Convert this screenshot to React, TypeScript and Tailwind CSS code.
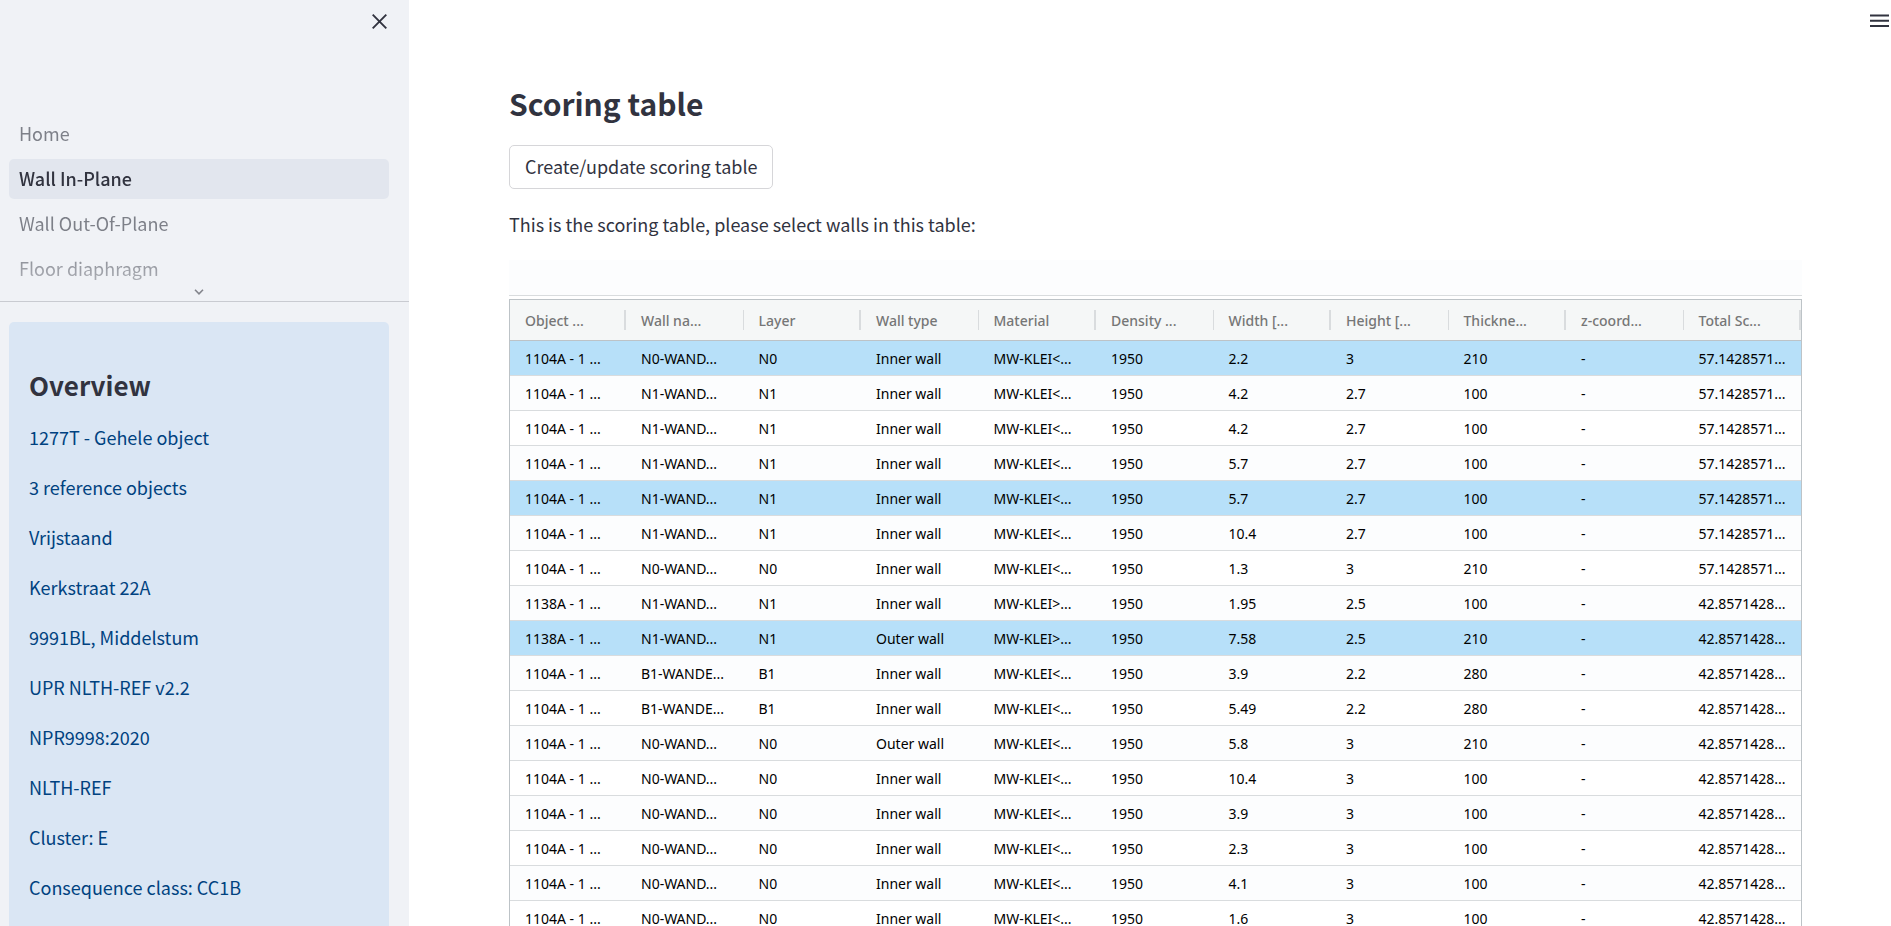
import React from "react";

interface WallRow {
  object: string;
  wall: string;
  layer: string;
  type: string;
  material: string;
  density: string;
  width: string;
  height: string;
  thickness: string;
  z: string;
  score: string;
  selected?: boolean;
}

const pages = ["Home", "Wall In-Plane", "Wall Out-Of-Plane", "Floor diaphragm"];

const overview = [
  "1277T - Gehele object",
  "3 reference objects",
  "Vrijstaand",
  "Kerkstraat 22A",
  "9991BL, Middelstum",
  "UPR NLTH-REF v2.2",
  "NPR9998:2020",
  "NLTH-REF",
  "Cluster: E",
  "Consequence class: CC1B",
];

const columns = [
  "Object ...",
  "Wall na...",
  "Layer",
  "Wall type",
  "Material",
  "Density ...",
  "Width [...",
  "Height [...",
  "Thickne...",
  "z-coord...",
  "Total Sc...",
];

function makeRow(
  object: string,
  wall: string,
  layer: string,
  type: string,
  material: string,
  width: string,
  height: string,
  thickness: string,
  score: string,
  selected = false
): WallRow {
  return { object, wall, layer, type, material, density: "1950", width, height, thickness, z: "-", score, selected };
}

const rows: WallRow[] = [
  makeRow("1104A - 1 ...", "N0-WAND...", "N0", "Inner wall", "MW-KLEI<...", "2.2", "3", "210", "57.1428571...", true),
  makeRow("1104A - 1 ...", "N1-WAND...", "N1", "Inner wall", "MW-KLEI<...", "4.2", "2.7", "100", "57.1428571..."),
  makeRow("1104A - 1 ...", "N1-WAND...", "N1", "Inner wall", "MW-KLEI<...", "4.2", "2.7", "100", "57.1428571..."),
  makeRow("1104A - 1 ...", "N1-WAND...", "N1", "Inner wall", "MW-KLEI<...", "5.7", "2.7", "100", "57.1428571..."),
  makeRow("1104A - 1 ...", "N1-WAND...", "N1", "Inner wall", "MW-KLEI<...", "5.7", "2.7", "100", "57.1428571...", true),
  makeRow("1104A - 1 ...", "N1-WAND...", "N1", "Inner wall", "MW-KLEI<...", "10.4", "2.7", "100", "57.1428571..."),
  makeRow("1104A - 1 ...", "N0-WAND...", "N0", "Inner wall", "MW-KLEI<...", "1.3", "3", "210", "57.1428571..."),
  makeRow("1138A - 1 ...", "N1-WAND...", "N1", "Inner wall", "MW-KLEI>...", "1.95", "2.5", "100", "42.8571428..."),
  makeRow("1138A - 1 ...", "N1-WAND...", "N1", "Outer wall", "MW-KLEI>...", "7.58", "2.5", "210", "42.8571428...", true),
  makeRow("1104A - 1 ...", "B1-WANDE...", "B1", "Inner wall", "MW-KLEI<...", "3.9", "2.2", "280", "42.8571428..."),
  makeRow("1104A - 1 ...", "B1-WANDE...", "B1", "Inner wall", "MW-KLEI<...", "5.49", "2.2", "280", "42.8571428..."),
  makeRow("1104A - 1 ...", "N0-WAND...", "N0", "Outer wall", "MW-KLEI<...", "5.8", "3", "210", "42.8571428..."),
  makeRow("1104A - 1 ...", "N0-WAND...", "N0", "Inner wall", "MW-KLEI<...", "10.4", "3", "100", "42.8571428..."),
  makeRow("1104A - 1 ...", "N0-WAND...", "N0", "Inner wall", "MW-KLEI<...", "3.9", "3", "100", "42.8571428..."),
  makeRow("1104A - 1 ...", "N0-WAND...", "N0", "Inner wall", "MW-KLEI<...", "2.3", "3", "100", "42.8571428..."),
  makeRow("1104A - 1 ...", "N0-WAND...", "N0", "Inner wall", "MW-KLEI<...", "4.1", "3", "100", "42.8571428..."),
  makeRow("1104A - 1 ...", "N0-WAND...", "N0", "Inner wall", "MW-KLEI<...", "1.6", "3", "100", "42.8571428..."),
];

function rowColor(row: WallRow, index: number) {
  if (row.selected) return "bg-[#b7e0f9]";
  return index % 2 === 1 ? "bg-[#fcfdfe]" : "bg-white";
}

function Sidebar() {
  return (
    <aside className="w-[409px] shrink-0 bg-[#f0f2f6] overflow-hidden">
      <div className="h-[114px] flex justify-end items-start pt-[11px] pr-5">
        <button type="button" aria-label="Close sidebar" className="w-5 h-5 text-[#31333f]">
          <svg viewBox="0 0 20 20" className="w-5 h-5" fill="none" stroke="currentColor" strokeWidth="1.9">
            <path d="M3.7 3.7l13.6 13.6M17.3 3.7L3.7 17.3" />
          </svg>
        </button>
      </div>

      <nav className="border-b border-[#c9cbd1] pl-[9px] pr-5">
        <ul className="flex flex-col gap-[5px] [mask-image:linear-gradient(#000_75%,transparent_125%)]">
          {pages.map((page) => (
            <li key={page}>
              <a
                href="#"
                className={
                  page === "Wall In-Plane"
                    ? "block h-10 px-2.5 rounded-[5px] bg-[#e2e6ee] text-lg leading-[38px] font-medium text-[#31333f]"
                    : "block h-10 px-2.5 rounded-[5px] text-lg leading-[38px] text-[#31333f]/60"
                }
              >
                {page}
              </a>
            </li>
          ))}
        </ul>
        <div className="h-[12px] flex justify-center">
          <svg viewBox="0 0 10 6" className="w-[10px] h-[6px]" fill="none" stroke="#83858c" strokeWidth="1.6">
            <path d="M1 0.8l4 4 4-4" />
          </svg>
        </div>
      </nav>

      <section className="mt-5 ml-[9px] mr-5 px-5 pt-[43px] pb-10 rounded-[5px] bg-[#dae6f4]">
        <h2 className="text-[26px] leading-10 font-bold text-[#31333f]">Overview</h2>
        <div className="mt-4 flex flex-col gap-[18px] text-lg leading-8 text-[#004280]">
          {overview.map((line) => (
            <p key={line}>{line}</p>
          ))}
        </div>
      </section>
    </aside>
  );
}

function ScoringTable() {
  return (
    <table className="w-full table-fixed border-separate border-spacing-0 border border-[#bdc3c7] border-b-0 font-['Noto_Sans',sans-serif] text-sm text-left">
      <thead>
        <tr className="bg-[#f5f7f7]">
          {columns.map((name, i) => (
            <th
              key={name}
              className={`h-[41px] p-0 pl-[15px] border-b border-[#bdc3c7] font-medium text-[#757676] ${i === 0 ? "w-[116px]" : ""}`}
            >
              <div className="flex items-center justify-between whitespace-nowrap">
                <span className="pt-0.5">{name}</span>
                <span className={`h-5 bg-[#d9dcde] ${i % 2 === 0 ? "w-0.5" : "w-px"}`}></span>
              </div>
            </th>
          ))}
        </tr>
      </thead>
      <tbody>
        {rows.map((row, i) => {
          const { selected, ...cells } = row;
          return (
            <tr key={i} className={rowColor(row, i)} aria-selected={selected}>
              {Object.values(cells).map((value, j) => (
                <td key={j} className="h-[35px] p-0 pt-0.5 pl-[15px] border-b border-[#d9dcde] text-black whitespace-nowrap">
                  {value}
                </td>
              ))}
            </tr>
          );
        })}
      </tbody>
    </table>
  );
}

export default function App() {
  return (
    <div className="flex h-screen overflow-hidden bg-white font-['Noto_Sans_CJK_SC',sans-serif] text-[#31333f]">
      <Sidebar />
      <main className="flex-1 min-w-0">
        <header className="h-[42px] flex justify-end items-center pr-px">
          <button type="button" aria-label="Menu" className="w-5 h-5">
            <svg viewBox="0 0 20 20" className="w-5 h-5" fill="none" stroke="currentColor" strokeWidth="2">
              <path d="M0 4.5h19M0 9.8h19M0 15h19" />
            </svg>
          </button>
        </header>
        <div className="pl-[100px] pr-[89px] pt-[38px]">
          <h1 className="text-[30px] leading-[46px] font-bold">Scoring table</h1>
          <button type="button" className="mt-[19px] h-11 px-[15px] pb-0.5 border border-[#d6d6d9] rounded-[5px] text-lg">
            Create/update scoring table
          </button>
          <p className="mt-[19px] text-lg leading-8">This is the scoring table, please select walls in this table:</p>
          <div className="mt-5 mb-[3px] h-9 bg-[#fcfdfe] border-b border-[#d9dcde]"></div>
          <ScoringTable />
        </div>
      </main>
    </div>
  );
}
